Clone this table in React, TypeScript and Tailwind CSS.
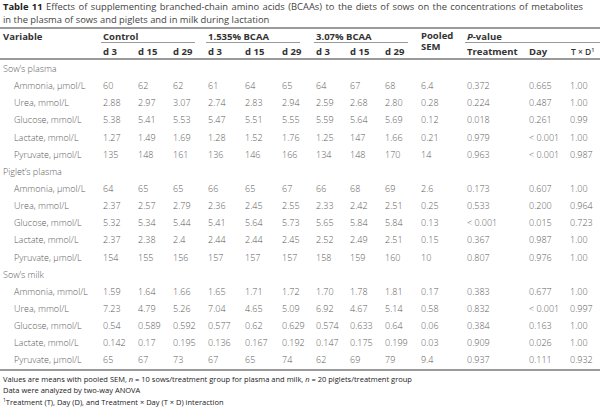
import React from "react";

const COLS =
  "grid grid-cols-[101px_35px_35px_35px_37px_37px_34px_34px_35px_36px_46px_62px_41px_1fr]";

type Row = { label: string; v: string[] } | { section: string };

const rows: Row[] = [
  { section: "Sow’s plasma" },
  { label: "Ammonia, μmol/L", v: ["60", "62", "62", "61", "64", "65", "64", "67", "68", "6.4", "0.372", "0.665", "1.00"] },
  { label: "Urea, mmol/L", v: ["2.88", "2.97", "3.07", "2.74", "2.83", "2.94", "2.59", "2.68", "2.80", "0.28", "0.224", "0.487", "1.00"] },
  { label: "Glucose, mmol/L", v: ["5.38", "5.41", "5.53", "5.47", "5.51", "5.55", "5.59", "5.64", "5.69", "0.12", "0.018", "0.261", "0.99"] },
  { label: "Lactate, mmol/L", v: ["1.27", "1.49", "1.69", "1.28", "1.52", "1.76", "1.25", "147", "1.66", "0.21", "0.979", "< 0.001", "1.00"] },
  { label: "Pyruvate, μmol/L", v: ["135", "148", "161", "136", "146", "166", "134", "148", "170", "14", "0.963", "< 0.001", "0.987"] },
  { section: "Piglet’s plasma" },
  { label: "Ammonia, μmol/L", v: ["64", "65", "65", "66", "65", "67", "66", "68", "69", "2.6", "0.173", "0.607", "1.00"] },
  { label: "Urea, mmol/L", v: ["2.37", "2.57", "2.79", "2.36", "2.45", "2.55", "2.33", "2.42", "2.51", "0.25", "0.533", "0.200", "0.964"] },
  { label: "Glucose, mmol/L", v: ["5.32", "5.34", "5.44", "5.41", "5.64", "5.73", "5.65", "5.84", "5.84", "0.13", "< 0.001", "0.015", "0.723"] },
  { label: "Lactate, mmol/L", v: ["2.37", "2.38", "2.4", "2.44", "2.44", "2.45", "2.52", "2.49", "2.51", "0.15", "0.367", "0.987", "1.00"] },
  { label: "Pyruvate, μmol/L", v: ["154", "155", "156", "157", "157", "157", "158", "159", "160", "10", "0.807", "0.976", "1.00"] },
  { section: "Sow’s milk" },
  { label: "Ammonia, mmol/L", v: ["1.59", "1.64", "1.66", "1.65", "1.71", "1.72", "1.70", "1.78", "1.81", "0.17", "0.383", "0.677", "1.00"] },
  { label: "Urea, mmol/L", v: ["7.23", "4.79", "5.26", "7.04", "4.65", "5.09", "6.92", "4.67", "5.14", "0.58", "0.832", "< 0.001", "0.997"] },
  { label: "Glucose, mmol/L", v: ["0.54", "0.589", "0.592", "0.577", "0.62", "0.629", "0.574", "0.633", "0.64", "0.06", "0.384", "0.163", "1.00"] },
  { label: "Lactate, mmol/L", v: ["0.142", "0.17", "0.195", "0.136", "0.167", "0.192", "0.147", "0.175", "0.199", "0.03", "0.909", "0.026", "1.00"] },
  { label: "Pyruvate, μmol/L", v: ["65", "67", "73", "67", "65", "74", "62", "69", "79", "9.4", "0.937", "0.111", "0.932"] },
];

export default function App() {
  return (
    <div className="w-[600px] h-[407px] bg-white overflow-hidden font-['Open_Sans',sans-serif] text-[#5c5c5c]">
      <div className="pl-[3px] pt-[1px] text-[9.4px] leading-[12.5px] text-[#444] h-[27px]">
        <div className="w-[580px] text-justify [text-align-last:justify]">
          <span className="font-bold text-[#222]">Table 11</span> Effects of supplementing branched-chain amino acids (BCAAs) to the diets of sows on the concentrations of metabolites
        </div>
        <div className="whitespace-nowrap">in the plasma of sows and piglets and in milk during lactation</div>
      </div>
      <div className="h-[2px] bg-[#9a9a9a]" />
      {/* header */}
      <div className={`${COLS} text-[9.5px] font-bold text-[#333] leading-[11px]`}>
        <div className="col-start-1 row-start-1 pl-[3px] pt-[2px] h-[14px]">Variable</div>
        <div className="col-start-2 col-span-3 row-start-1 pl-[2px] pt-[2px] h-[14px] mr-[11px] border-b border-[#999]">Control</div>
        <div className="col-start-5 col-span-3 row-start-1 pl-[2px] pt-[2px] h-[14px] mr-[14px] border-b border-[#999]">1.535% BCAA</div>
        <div className="col-start-8 col-span-3 row-start-1 pl-[2px] pt-[2px] h-[14px] mr-[11px] border-b border-[#999]">3.07% BCAA</div>
        <div className="col-start-11 row-start-1 row-span-2 pl-[2px] pt-[1px]">
          Pooled
          <br />
          SEM
        </div>
        <div className="col-start-12 col-span-3 row-start-1 pl-[2px] pt-[2px] h-[14px] border-b border-[#999]">
          <span className="italic">P</span>-value
        </div>
        {["d 3", "d 15", "d 29", "d 3", "d 15", "d 29", "d 3", "d 15", "d 29"].map((d, i) => (
          <div key={i} className="row-start-2 pl-[2px] h-[15px] pt-[3px]" style={{ gridColumnStart: i + 2 }}>
            {d}
          </div>
        ))}
        <div className="col-start-12 row-start-2 pl-[2px] pt-[3px] h-[15px]">Treatment</div>
        <div className="col-start-13 row-start-2 pl-[2px] pt-[3px] h-[15px]">Day</div>
        <div className="col-start-14 row-start-2 pl-[3px] pt-[3px] h-[15px] whitespace-nowrap font-semibold text-[8.5px]">
          T × D<sup className="text-[5.5px]">1</sup>
        </div>
      </div>
      <div className="h-[2px] bg-[#9a9a9a]" />
      {/* body */}
      <div className="text-[9px] leading-[17.15px] font-light">
        {rows.map((r, i) =>
          "section" in r ? (
            <div key={i} className="h-[17.15px] pl-[3px]">
              {r.section}
            </div>
          ) : (
            <div key={i} className={`${COLS} h-[17.15px]`}>
              <div className="pl-[14px] whitespace-nowrap">{r.label}</div>
              {r.v.map((x, j) => (
                <div key={j} className="pl-[2px] whitespace-nowrap">
                  {x}
                </div>
              ))}
            </div>
          )
        )}
      </div>
      <div className="h-[2px] bg-[#9a9a9a]" />
      <div className="pl-[3px] pt-[3px] text-[7.5px] leading-[11.5px] text-[#222] font-medium">
        <div className="whitespace-nowrap">
          Values are means with pooled SEM, <span className="italic">n</span> = 10 sows/treatment group for plasma and milk,{" "}
          <span className="italic">n</span> = 20 piglets/treatment group
        </div>
        <div>Data were analyzed by two-way ANOVA</div>
        <div>
          <sup className="text-[5px]">1</sup>Treatment (T), Day (D), and Treatment × Day (T × D) interaction
        </div>
      </div>
    </div>
  );
}
